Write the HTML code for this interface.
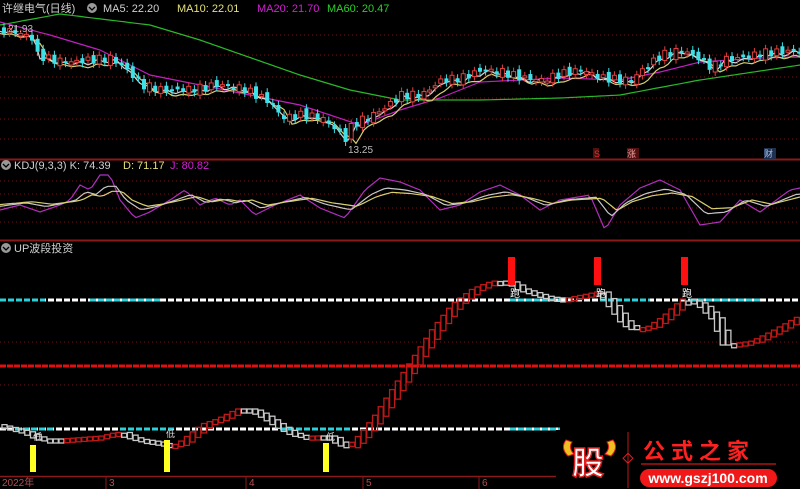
<!DOCTYPE html>
<html><head><meta charset="utf-8"><style>
html,body{margin:0;padding:0;background:#000;width:800px;height:489px;overflow:hidden}
svg{display:block}
text{font-family:"Liberation Sans","Noto Sans CJK SC",sans-serif}
</style></head><body>
<svg id="s" width="800" height="489" viewBox="0 0 800 489" xmlns="http://www.w3.org/2000/svg">
<rect width="800" height="489" fill="#000"/>
<g stroke="#7a1010" stroke-dasharray="1,3" stroke-width="1">
<line x1="0" y1="35" x2="800" y2="35"/><line x1="0" y1="55" x2="800" y2="55"/><line x1="0" y1="77" x2="800" y2="77"/><line x1="0" y1="98" x2="800" y2="98"/><line x1="0" y1="119" x2="800" y2="119"/><line x1="0" y1="139" x2="800" y2="139"/>
<line x1="0" y1="181" x2="800" y2="181"/><line x1="0" y1="194" x2="800" y2="194"/><line x1="0" y1="208" x2="800" y2="208"/><line x1="0" y1="222" x2="800" y2="222"/><line x1="0" y1="342" x2="800" y2="342"/><line x1="0" y1="385" x2="800" y2="385"/>
</g>
<line x1="0" y1="159.5" x2="800" y2="159.5" stroke="#8a1a1a" stroke-width="2"/>
<line x1="0" y1="240.5" x2="800" y2="240.5" stroke="#8a1a1a" stroke-width="2"/>
<line x1="0" y1="476.5" x2="800" y2="476.5" stroke="#8a1a1a" stroke-width="1.5"/>
<g id="gtop"></g><g id="gkdj"></g>
<line x1="0" y1="300" x2="800" y2="300" stroke="#fff" stroke-width="3" stroke-dasharray="6,2"/>
<line x1="0" y1="429" x2="560" y2="429" stroke="#fff" stroke-width="3" stroke-dasharray="6,2"/>
<g stroke="#2cd0d8" stroke-width="3" stroke-dasharray="6,2">
<line x1="0" y1="300" x2="45" y2="300"/><line x1="90" y1="300" x2="160" y2="300"/><line x1="510" y1="300" x2="560" y2="300"/><line x1="600" y1="300" x2="650" y2="300"/><line x1="690" y1="300" x2="760" y2="300"/>
<line x1="15" y1="429" x2="55" y2="429"/><line x1="120" y1="429" x2="175" y2="429"/><line x1="280" y1="429" x2="350" y2="429"/><line x1="510" y1="429" x2="560" y2="429"/>
</g>
<line x1="0" y1="366" x2="800" y2="366" stroke="#e01010" stroke-width="3" stroke-dasharray="6,1"/>
<g id="gbot"></g>
<g fill="#ff1010"><rect x="508" y="257" width="7" height="28"/><rect x="594" y="257" width="7" height="28"/><rect x="681" y="257" width="7" height="28"/></g>
<g fill="#fff" font-size="10"><text x="510" y="297">跑</text><text x="596" y="297">跑</text><text x="682" y="297">跑</text></g>
<g fill="#ffff20"><rect x="30" y="445" width="6" height="27"/><rect x="164" y="440" width="6" height="32"/><rect x="323" y="443" width="6" height="29"/></g>
<g fill="#ddd" font-size="9"><text x="33" y="440">低</text><text x="166" y="437">低</text><text x="326" y="440">低</text></g>
<g font-size="11">
<text x="2" y="12" fill="#d0d0d0">许继电气(日线)</text>
<circle cx="92" cy="8" r="5" fill="#999"/><path d="M89 7l3 3 3-3" stroke="#000" stroke-width="1.3" fill="none"/>
<text x="103" y="12" fill="#d0d0d0">MA5: 22.20</text>
<text x="177" y="12" fill="#e6e07a">MA10: 22.01</text>
<text x="257" y="12" fill="#d81ed8">MA20: 21.70</text>
<text x="327" y="12" fill="#2ad02a">MA60: 20.47</text>
<circle cx="6" cy="165" r="5" fill="#999"/><path d="M3 164l3 3 3-3" stroke="#000" stroke-width="1.3" fill="none"/>
<text x="14" y="169" fill="#d0d0d0">KDJ(9,3,3)  K: 74.39</text>
<text x="123" y="169" fill="#e6e07a">D: 71.17</text>
<text x="170" y="169" fill="#d81ed8">J: 80.82</text>
<circle cx="6" cy="248" r="5" fill="#999"/><path d="M3 247l3 3 3-3" stroke="#000" stroke-width="1.3" fill="none"/>
<text x="14" y="252" fill="#d0d0d0">UP波段投资</text>
<text x="8" y="32" fill="#bbb" font-size="10">21.93</text>
<text x="348" y="153" fill="#bbb" font-size="10">13.25</text>
</g>
<g font-size="9"><rect x="593" y="148" width="6" height="11" fill="#501010"/><text x="594" y="157" fill="#e03030">S</text>
<rect x="627" y="148" width="12" height="11" fill="#501010"/><text x="627" y="157" fill="#f0a0a0">涨</text>
<rect x="764" y="148" width="12" height="11" fill="#203050"/><text x="764" y="157" fill="#a0c0f0">财</text></g>
<g stroke="#8a1a1a"><line x1="106" y1="476" x2="106" y2="489"/><line x1="246" y1="476" x2="246" y2="489"/><line x1="363" y1="476" x2="363" y2="489"/><line x1="479" y1="476" x2="479" y2="489"/></g>
<g fill="#b05050" font-size="10"><text x="2" y="486">2022年</text><text x="109" y="486">3</text><text x="249" y="486">4</text><text x="366" y="486">5</text><text x="482" y="486">6</text></g>
<g>
<rect x="556" y="430" width="244" height="59" fill="#000"/>
<path d="M566 440 q-6 8 2 16 l6 -2 q-6 -6 -2 -12z" fill="#f0c020" stroke="#e02020"/>
<path d="M613 440 q6 8 -2 16 l-6 -2 q6 -6 2 -12z" fill="#f0c020" stroke="#e02020"/>
<text x="572" y="474" font-size="32" font-weight="bold" fill="#fff" stroke="#e02020" stroke-width="1.5" font-family="Noto Sans CJK SC,sans-serif">股</text>
<line x1="628" y1="432" x2="628" y2="488" stroke="#c01818"/>
<rect x="624" y="455" width="7" height="7" transform="rotate(45 628 459)" fill="none" stroke="#e02020"/>
<text x="643" y="459" font-size="22" fill="#ff2020" letter-spacing="6" font-family="Noto Serif CJK SC,serif" font-weight="bold">公式之家</text>
<line x1="641" y1="464" x2="776" y2="464" stroke="#801010" stroke-width="2"/>
<rect x="640" y="469" width="137" height="18" rx="9" fill="#f01818"/>
<text x="708" y="483" font-size="14" font-weight="bold" fill="#fff" text-anchor="middle">www.gszj100.com</text>
</g>
</svg>
<script>
(function(){
var NS="http://www.w3.org/2000/svg";
function el(p,t,a){var e=document.createElementNS(NS,t);for(var k in a)e.setAttribute(k,a[k]);p.appendChild(e);return e;}
function interp(pts,x){for(var i=1;i<pts.length;i++){if(x<=pts[i][0]){var a=pts[i-1],b=pts[i];return a[1]+(b[1]-a[1])*(x-a[0])/(b[0]-a[0]);}}return pts[pts.length-1][1];}
function line(g,pts,col,step,jit){var d="";for(var x=0;x<=800;x+=step){var y=interp(pts,x)+(jit?Math.sin(x*0.37)*jit+Math.sin(x*1.3)*jit*0.5:0);d+=(x?"L":"M")+x+" "+y.toFixed(1);}el(g,"path",{d:d,stroke:col,fill:"none","stroke-width":1.2});}
var gt=document.getElementById("gtop");
var price=[[0,30],[15,32],[30,38],[35,55],[50,60],[70,62],[90,60],[110,58],[125,70],[140,85],[160,90],[180,90],[200,88],[215,85],[240,88],[270,103],[280,118],[300,115],[320,118],[335,130],[345,140],[350,125],[370,115],[380,110],[400,95],[420,95],[440,80],[460,78],[480,70],[500,72],[520,78],[540,80],[560,74],[580,70],[600,78],[620,80],[630,80],[640,70],[660,55],[680,50],[700,60],[710,68],[720,60],[740,58],[760,53],[780,52],[800,50]];
line(gt,[[0,25],[60,14],[150,25],[200,40],[300,75],[350,90],[400,100],[480,100],[560,98],[620,95],[700,80],[800,65]],"#2ab82a",5,0);
line(gt,[[0,22],[50,35],[100,50],[150,75],[200,85],[250,95],[300,105],[330,115],[360,125],[400,110],[440,98],[480,82],[520,80],[560,78],[620,80],[660,72],[700,62],[760,58],[800,57]],"#c020c0",5,0);
line(gt,price.map(function(p){return [p[0]+12,p[1]+5];}),"#d8d070",4,1);
line(gt,price.map(function(p){return [p[0]+5,p[1]+2];}),"#d8d8d8",4,1.5);
var prev=interp(price,0);
for(var x=2;x<800;x+=5.6){var c=interp(price,x)+Math.sin(x*0.5)*4;var o=prev+Math.sin(x*2.1)*3;var up=c<o;var col=up?"#e04040":"#3ee0e8";var t=Math.min(o,c),h=Math.max(2,Math.abs(o-c));
el(gt,"line",{x1:x+2,x2:x+2,y1:t-4,y2:t+h+4,stroke:col});
if(up)el(gt,"rect",{x:x,y:t,width:4,height:h,fill:"#000",stroke:col});else el(gt,"rect",{x:x,y:t,width:4,height:h,fill:col});prev=c;}
var gk=document.getElementById("gkdj");
var J=[[0,210],[20,205],[40,212],[60,205],[70,200],[80,185],[90,190],[100,175],[110,175],[120,200],[135,218],[150,212],[170,200],[185,190],[200,205],[215,198],[230,205],[240,200],[255,215],[275,205],[300,195],[320,208],[345,218],[365,190],[380,178],[400,182],[420,190],[440,210],[460,205],[480,192],[500,185],[520,195],[540,210],[560,200],[590,195],[605,230],[620,205],[640,188],[660,180],[680,190],[700,225],[720,222],[740,200],[760,212],[790,190],[800,188]];
line(gk,J,"#b030c0",4,0);
line(gk,J.map(function(p){return [p[0]+6,200+(p[1]-200)*0.55];}),"#c8c8c8",4,0);
line(gk,J.map(function(p){return [p[0]+12,200+(p[1]-200)*0.35];}),"#d8d070",4,0);
var gb=document.getElementById("gbot");
var bp=[[0,428],[20,433],[35,440],[45,440],[60,440],[100,437],[115,433],[130,440],[150,443],[165,447],[175,445],[200,425],[215,420],[235,410],[245,410],[260,418],[275,428],[290,436],[305,438],[315,437],[325,437],[335,445],[345,448],[355,438],[370,420],[390,390],[410,360],[430,330],[450,305],[470,290],[490,282],[505,283],[515,290],[540,298],[560,300],[580,296],[595,293],[605,305],[620,325],[630,330],[645,328],[660,318],[680,300],[695,305],[710,320],[720,345],[730,345],[750,342],[770,332],[795,318]];
var S=5.7;
for(var x2=2;x2<798;x2+=S){var v=interp(bp,x2),pv=interp(bp,x2-S),pp=interp(bp,x2-2*S);var up2=v<pv-0.3;var col2=up2?"#c01818":"#c8c8c8";
var t2=Math.min(v,pp),h2=Math.max(3,Math.abs(v-pp));
el(gb,"rect",{x:x2,y:t2-1,width:5,height:h2+1,fill:"none",stroke:col2,"stroke-width":1.3});}
})();
</script>
</body></html>
